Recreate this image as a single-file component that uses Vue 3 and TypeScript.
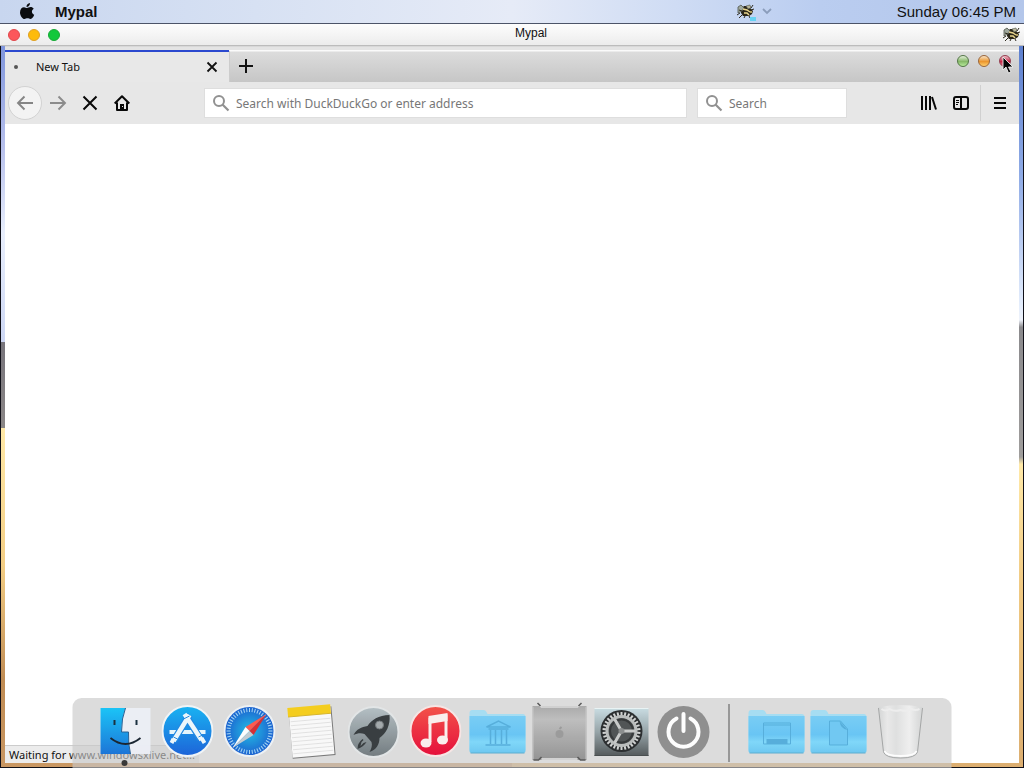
<script setup lang="ts">
import { ref } from 'vue'

interface WindowButton {
  name: string
  tone: string
}

const appName = 'Mypal'
const clock = 'Sunday 06:45 PM'
const address = ref('')
const query = ref('')

const trafficLights: WindowButton[] = [
  { name: 'Close', tone: 'red' },
  { name: 'Minimize', tone: 'amber' },
  { name: 'Zoom', tone: 'green' },
]

const orbs: WindowButton[] = [
  { name: 'Minimize browser', tone: 'lime' },
  { name: 'Restore browser', tone: 'orange' },
  { name: 'Close browser', tone: 'crimson' },
]

const ticks: number[] = Array.from({ length: 48 }, (_, i) => i * 7.5)
const teeth: number[] = Array.from({ length: 30 }, (_, i) => i * 12)
const noteLines: number[] = [17, 21, 25, 29, 33, 37, 41, 45, 49]
</script>

<template>
  <div class="desktop">
    <svg class="defs" width="0" height="0" aria-hidden="true">
      <defs>
        <symbol id="bee" viewBox="0 0 17 15">
          <path d="M4 5l3-3 5 0 2 3 2 2-1 3-3 2-6 0-2-3z" fill="#2a261a" />
          <path d="M1 3l3-2 3 3-2 3-4 2z" fill="#9fa89d" stroke="#4f544b" stroke-width=".8" />
          <path d="M9 2l4-1 1 3-3 1z" fill="#b9b69b" stroke="#4f544b" stroke-width=".6" />
          <path d="M6 5l4 1 3 2M7 9l3 0 2 2" stroke="#e9d58d" stroke-width="1.500" fill="none" />
          <path d="M3 9l-3 2M5 11l-3 3M8 12l-1 2M12 12l1 2M14 4l2-3M14 6l3-1M2 6l3 1" stroke="#2d291d" fill="none" />
          <circle cx="14" cy="8" r="1" fill="#d8c479" />
        </symbol>
        <symbol id="magnifier" viewBox="0 0 18 18">
          <circle cx="7" cy="7" r="5" fill="none" stroke="#919191" stroke-width="2" />
          <path d="M10.500 10.500l6 6" stroke="#919191" stroke-width="2.200" />
        </symbol>
        <symbol id="folder" viewBox="0 0 58 46">
          <path d="M1 4q0-3 3-3h11q2 0 3 2l1 2h35q3 0 3 3v33H1z" fill="#a4def3" />
          <path d="M1 7h56v35q0 2-2 2H3q-2 0-2-2z" fill="url(#folderFace)" />
          <path d="M2 44h54" stroke="#58acd0" />
        </symbol>
        <linearGradient id="folderFace" x1="0" y1="0" x2="0" y2="1">
          <stop offset="0" stop-color="#75cdf6" /><stop offset=".5" stop-color="#65c5f5" />
          <stop offset=".7" stop-color="#7dd7fb" /><stop offset="1" stop-color="#69c7f1" />
        </linearGradient>
        <linearGradient id="finderFace" x1="0" y1="0" x2="0" y2="1">
          <stop offset="0" stop-color="#14c3f8" /><stop offset="1" stop-color="#1672d8" />
        </linearGradient>
        <linearGradient id="storeFace" x1="0" y1="0" x2="0" y2="1">
          <stop offset="0" stop-color="#12b2f3" /><stop offset="1" stop-color="#165fd9" />
        </linearGradient>
        <radialGradient id="safariFace">
          <stop offset="0" stop-color="#1cbde4" /><stop offset="1" stop-color="#155bcf" />
        </radialGradient>
        <linearGradient id="rocketFace" x1="0" y1="0" x2="0" y2="1">
          <stop offset="0" stop-color="#b4bfc4" /><stop offset="1" stop-color="#6f787c" />
        </linearGradient>
        <linearGradient id="musicFace" x1="0" y1="0" x2="0" y2="1">
          <stop offset="0" stop-color="#f44e44" /><stop offset="1" stop-color="#e60735" />
        </linearGradient>
        <linearGradient id="towerFace" x1="0" y1="0" x2="0" y2="1">
          <stop offset="0" stop-color="#a9a9a9" /><stop offset=".25" stop-color="#bdbdbd" /><stop offset="1" stop-color="#929292" />
        </linearGradient>
        <linearGradient id="prefsFace" x1="0" y1="0" x2="0" y2="1">
          <stop offset="0" stop-color="#c9dde3" /><stop offset=".5" stop-color="#94a2a6" /><stop offset="1" stop-color="#4f5557" />
        </linearGradient>
        <linearGradient id="binFace">
          <stop offset="0" stop-color="#d2d4d4" /><stop offset=".2" stop-color="#ececec" />
          <stop offset=".4" stop-color="#e0e1e1" /><stop offset=".7" stop-color="#f3f3f3" /><stop offset="1" stop-color="#d2d4d4" />
        </linearGradient>
      </defs>
    </svg>

    <header class="menubar">
      <button class="plain apple" aria-label="System menu">
        <svg width="16" height="18" viewBox="0 0 16 18">
          <path d="M11 0c.2 2-1.500 4-3.500 4C7.300 2 9 .3 11 0zM8 5c.8 0 2-.9 3.600-.9 1.200 0 2.400.6 3.100 1.600-2.600 1.600-2.200 5 .5 6-.6 1.700-2 4.300-3.700 4.300-1.200 0-1.700-.7-3-.7s-1.900.7-3 .7C3.500 16 1 12.500 1 9.400 1 6 3 4.200 5 4.200c1.300 0 2.300.8 3 .8z" fill="#0b0d10" />
        </svg>
      </button>
      <strong class="app-name">{{ appName }}</strong>
      <button class="plain tray" aria-label="Running applications">
        <svg width="19" height="18" viewBox="0 0 19 18">
          <use href="#bee" y="1" width="17" height="15" /><rect x="13" y="14" width="6" height="4" fill="#66d2f3" />
        </svg>
        <svg width="10" height="7" viewBox="0 0 10 7"><path d="M1 1l4 4 4-4" fill="none" stroke="#8b9dbb" stroke-width="1.800" /></svg>
      </button>
      <time class="clock">{{ clock }}</time>
    </header>

    <div class="titlebar">
      <div class="lights">
        <button v-for="light in trafficLights" :key="light.name" class="light" :class="light.tone" :aria-label="light.name"></button>
      </div>
      <h1>{{ appName }}</h1>
      <svg class="title-bee" width="17" height="15"><use href="#bee" width="17" height="15" /></svg>
    </div>

    <div class="frame">
      <main class="browser">
        <div class="tabstrip">
          <div class="tab">
            <span class="loading"></span>
            <span class="tab-label">New Tab</span>
            <button class="plain" aria-label="Close tab">
              <svg width="12" height="12" viewBox="0 0 12 12"><path d="M1.500 1.500l9 9M10.500 1.500l-9 9" stroke="#111" stroke-width="1.800" /></svg>
            </button>
          </div>
          <button class="plain new-tab" aria-label="Open a new tab">
            <svg width="14" height="14" viewBox="0 0 14 14"><path d="M7 0v14M0 7h14" stroke="#111" stroke-width="2" /></svg>
          </button>
          <div class="orbs">
            <button v-for="orb in orbs" :key="orb.name" class="orb" :class="orb.tone" :aria-label="orb.name"></button>
            <svg class="pointer" width="12" height="18" viewBox="0 0 12 18">
              <path d="M1 1v13l3-3 2.500 6 2.500-1-2.500-5H11z" fill="#050505" stroke="#eee" stroke-width=".9" />
            </svg>
          </div>
        </div>

        <nav class="toolbar">
          <button class="plain back" aria-label="Back">
            <svg width="18" height="16" viewBox="0 0 18 16"><path d="M17 8H2M8.500 1.500L2 8l6.500 6.500" fill="none" stroke="#858585" stroke-width="1.900" /></svg>
          </button>
          <button class="plain tool" aria-label="Forward">
            <svg width="18" height="16" viewBox="0 0 18 16"><path d="M1 8h15M9.500 1.500L16 8l-6.500 6.500" fill="none" stroke="#8b8b8b" stroke-width="1.900" /></svg>
          </button>
          <button class="plain tool" aria-label="Stop">
            <svg width="16" height="16" viewBox="0 0 16 16"><path d="M1.500 1.500l13 13M14.500 1.500l-13 13" stroke="#080808" stroke-width="2" /></svg>
          </button>
          <button class="plain tool" aria-label="Home">
            <svg width="16" height="16" viewBox="0 0 16 16">
              <path d="M.7 8.500L8 1.200l7.300 7.300M3 7.500V15h10V7.500" fill="none" stroke="#080808" stroke-width="2" stroke-linejoin="round" />
              <path d="M6 9h4v5H6z" fill="#080808" /><path d="M8 11h1v1H8z" fill="#e8e8e8" />
            </svg>
          </button>
          <label class="field address">
            <svg width="18" height="18"><use href="#magnifier" /></svg>
            <input v-model="address" type="text" aria-label="Address" placeholder="Search with DuckDuckGo or enter address" />
          </label>
          <label class="field search">
            <svg width="18" height="18"><use href="#magnifier" /></svg>
            <input v-model="query" type="text" aria-label="Search" placeholder="Search" />
          </label>
          <div class="tools-end">
            <button class="plain tool" aria-label="Library">
              <svg width="16" height="14" viewBox="0 0 16 14"><path d="M1 0v14M5 0v14M9 0v14M11 1l4 12.500" stroke="#080808" stroke-width="2" /></svg>
            </button>
            <button class="plain tool" aria-label="Sidebars">
              <svg width="16" height="14" viewBox="0 0 16 14">
                <rect x="1" y="1" width="14" height="12" rx="2" fill="none" stroke="#080808" stroke-width="2" />
                <path d="M8 1v12" stroke="#080808" stroke-width="2" /><path d="M3 4.500h3M3 6.500h3M3 8.500h2" stroke="#080808" />
              </svg>
            </button>
            <button class="plain menu" aria-label="Open menu">
              <svg width="12" height="12" viewBox="0 0 12 12"><path d="M0 1h12M0 6h12M0 11h12" stroke="#080808" stroke-width="2" /></svg>
            </button>
          </div>
        </nav>

        <section class="page" aria-label="Page">
          <p class="status">Waiting for www.windowsxlive.net...</p>
        </section>
      </main>
    </div>

    <nav class="dock" aria-label="Dock">
      <button class="plain app" aria-label="Finder">
        <svg width="52" height="58" viewBox="0 0 52 58">
          <path d="M1 5h50v46H1z" fill="#eceff6" />
          <path d="M1 5h25q-4 10-4 24h7q-.5 12 2 22H1z" fill="url(#finderFace)" />
          <path d="M26 5q-4 10-4 24h7q-.5 12 2 22" fill="none" stroke="#235d91" />
          <path d="M15 17v5M37 17v5" stroke="#142b3a" stroke-width="2" />
          <path d="M11 35q15 12 30 0" fill="none" stroke="#14202c" stroke-width="1.800" />
        </svg>
        <span class="running"></span>
      </button>
      <button class="plain app" aria-label="App Store">
        <svg width="52" height="58" viewBox="0 0 52 58">
          <circle cx="26" cy="28" r="25" fill="url(#storeFace)" stroke="#f1f5f8" stroke-width="2" />
          <path d="M8 29h36" stroke="#e6f5fd" stroke-width="4" />
          <path d="M28 12L12 38M24 12l15 24" stroke="#1c87e3" stroke-width="7" />
          <path d="M28 12L12 38M23 11l17 26" stroke="#edf8fd" stroke-width="4.500" />
          <path d="M12 36l-2 4M40 35l3 5" stroke="#edf8fd" stroke-width="4" /><path d="M22 16l6-3M12 34l4 2M37 34l4-2" stroke="#2285df" />
        </svg>
      </button>
      <button class="plain app" aria-label="Safari">
        <svg width="52" height="58" viewBox="0 0 52 58">
          <circle cx="26" cy="28" r="25" fill="url(#safariFace)" stroke="#eef2f5" stroke-width="2" />
          <path v-for="angle in ticks" :key="angle" d="M26 5v4" stroke="#a6d6f6" :transform="`rotate(${angle} 26 28)`" />
          <path d="M43 11L22 24l4 4z" fill="#ff5549" /><path d="M43 11L30 32l-4-4z" fill="#d7292d" />
          <path d="M22 24L9 45l17-17z" fill="#fff" /><path d="M9 45l21-13-4-4z" fill="#c3ccd2" />
        </svg>
      </button>
      <button class="plain app" aria-label="Notes">
        <svg width="52" height="58" viewBox="0 0 52 58">
          <g transform="rotate(-5 26 29)">
            <path d="M5 5h43v49H5z" fill="#777" /><path d="M5 4h42v49H5z" fill="#fafafa" />
            <path v-for="line in noteLines" :key="line" :d="`M6 ${line}h40`" stroke="#e2e2e2" />
            <path d="M4 3h43v9H4z" fill="#f6cd17" /><path d="M4 12h43" stroke="#d5b329" />
          </g>
        </svg>
      </button>
      <button class="plain app" aria-label="Launchpad">
        <svg width="52" height="58" viewBox="0 0 52 58">
          <circle cx="26" cy="29" r="25" fill="url(#rocketFace)" stroke="#e3e6e7" stroke-width="2" />
          <path d="M42 12c-11 0-18 5-22 11-6 1-11 3-14 9 4-2 8-2 11-1l7 8c1 3 0 7-2 10 7-2 10-8 10-14 7-5 11-13 10-23z" fill="#33383b" />
          <circle cx="32" cy="22" r="4" fill="#a1a7aa" stroke="#71777a" />
          <path d="M15 36q-5 4-5 10 6-2 9-7l-3 1-3 3 1-4 2-2z" fill="#33383b" />
        </svg>
      </button>
      <button class="plain app" aria-label="Music">
        <svg width="52" height="58" viewBox="0 0 52 58">
          <circle cx="26" cy="28" r="25" fill="url(#musicFace)" stroke="#f8e6e5" stroke-width="2" />
          <path d="M20.500 39V16L36.500 13v24" fill="none" stroke="#fbefed" stroke-width="3" /><path d="M19 13l19-3v8l-19 3z" fill="#fbefed" />
          <ellipse cx="16.500" cy="40" rx="5.500" ry="4.500" fill="#fbefed" /><ellipse cx="33" cy="37" rx="5.500" ry="4.500" fill="#fbefed" />
        </svg>
      </button>
      <button class="plain app" aria-label="Library folder">
        <svg width="58" height="46" viewBox="0 0 58 46">
          <use href="#folder" />
          <path d="M18 18l12-6 12 6zM20 20h20M17 36h25M22 21v14M27 21v14M33 21v14M38 21v14" fill="none" stroke="#52addb" stroke-width="1.500" />
        </svg>
      </button>
      <button class="plain app" aria-label="Computer">
        <svg width="56" height="60" viewBox="0 0 56 60">
          <path d="M1 4h54v54H1z" fill="url(#towerFace)" />
          <path d="M6 2l4 3h36l4-3" fill="none" stroke="#ddd" stroke-width="1.500" />
          <path d="M6 1l3 3M50 1l-3 3M2 58h5l3-3M54 58h-5l-3-3" fill="none" stroke="#555" stroke-width="1.500" />
          <path d="M10 57h36" stroke="#d2d2d2" stroke-width="2" />
          <path d="M1.500 5v52M54.500 5v52" stroke="#c6c6c6" />
          <circle cx="28" cy="32" r="4" fill="#999" /><path d="M28 27l2-2" stroke="#999" stroke-width="2" />
        </svg>
      </button>
      <button class="plain app" aria-label="System Preferences">
        <svg width="56" height="58" viewBox="0 0 56 58">
          <path d="M1 5h54v48H1z" fill="url(#prefsFace)" /><path d="M1 5.500h54" stroke="#eaf4f6" /><path d="M1 52.500h54" stroke="#454a4b" />
          <circle cx="28" cy="28" r="21" fill="#25282a" />
          <path v-for="angle in teeth" :key="angle" d="M28 9v5" stroke="#d1d3d2" stroke-width="2" :transform="`rotate(${angle} 28 28)`" />
          <circle cx="28" cy="28" r="14.500" fill="#4c5051" stroke="#b9bcbb" stroke-width="3" />
          <circle cx="28" cy="28" r="11.500" fill="none" stroke="#303334" stroke-width="2" />
          <path d="M28 28h14M28 28l-7-12M28 28l-7 12" stroke="#c8cac9" stroke-width="3" /><circle cx="28" cy="28" r="3" fill="#888b8b" />
        </svg>
      </button>
      <button class="plain app" aria-label="Power">
        <svg width="54" height="58" viewBox="0 0 54 58">
          <circle cx="27" cy="29" r="26" fill="#8c8c8c" />
          <path d="M20 15.500a15 15 0 1 0 14 0M27 11v17" fill="none" stroke="#fff" stroke-width="4" stroke-linecap="round" />
        </svg>
      </button>
      <span class="divider"></span>
      <button class="plain app" aria-label="Desktop folder">
        <svg width="58" height="46" viewBox="0 0 58 46">
          <use href="#folder" /><path d="M16 14h27v21H16zM16 16h27" fill="none" stroke="#52addb" /><path d="M19 30h21v5H19z" fill="#52addb" />
        </svg>
      </button>
      <button class="plain app" aria-label="Documents folder">
        <svg width="58" height="46" viewBox="0 0 58 46">
          <use href="#folder" /><path d="M20 12h11l7 8v16H20z" fill="#6dc8f3" stroke="#52addb" /><path d="M30 12l8 9q-7-1-8-9z" fill="#52addb" />
        </svg>
      </button>
      <button class="plain app" aria-label="Trash">
        <svg width="46" height="56" viewBox="0 0 46 56">
          <path d="M1 3q22-4 44 0l-5 45q-2 6-17 6T6 48z" fill="url(#binFace)" opacity=".85" />
          <path d="M1 4l5 44q2 6 17 6t17-6l5-44" fill="none" stroke="#a2a4a4" /><path d="M7 47q2 5 16 5t16-5" fill="none" stroke="#fff" stroke-width="2" />
          <path d="M4 5q4 3 8 0 5 3 11 1 6 2 11-1 4 2 8 0" fill="none" stroke="#eee" stroke-width="2" />
        </svg>
      </button>
    </nav>
  </div>
</template>

<style>
html,
body {
  height: 100%;
}
body {
  margin: 0;
}
</style>

<style scoped>
.desktop {
  position: relative;
  display: flex;
  flex-direction: column;
  min-height: 100vh;
  overflow: hidden;
  font-family: "Noto Sans", "Open Sans", sans-serif;
  font-size: 11px;
  color: #111;
  background: #fff;
}
.defs {
  position: absolute;
}
svg {
  display: block;
  flex: none;
}
.plain {
  display: flex;
  align-items: center;
  justify-content: center;
  padding: 0;
  border: 0;
  background: none;
  color: inherit;
  font: inherit;
}
.menubar {
  display: flex;
  align-items: center;
  box-sizing: border-box;
  height: 24px;
  padding: 0 8px 0 19px;
  border-bottom: 1px solid #4c5468;
  background: linear-gradient(90deg, #c8d6ef, #d7e1f3 25%, #e6ebf7 50%, #cfdcf4 66%, #bacdf0 80%, #b3c6ea);
  font-family: "Liberation Sans", Arial, sans-serif;
  font-size: 15px;
}
.app-name {
  flex: 1;
  margin-left: 20px;
}
.tray {
  gap: 6px;
  margin-right: 125px;
}
.titlebar {
  display: grid;
  grid-template-columns: 1fr auto 1fr;
  align-items: center;
  box-sizing: border-box;
  height: 22px;
  padding: 0 4px 0 8px;
  border-bottom: 1px solid #bcbcbc;
  background: linear-gradient(#fdfdfd, #ececec);
  font-family: "Liberation Sans", Arial, sans-serif;
}
.titlebar h1 {
  margin: 0;
  padding-left: 34px;
  font-size: 12px;
  font-weight: 400;
  line-height: 18px;
  align-self: start;
}
.lights {
  display: flex;
  gap: 8px;
}
.light {
  width: 12px;
  height: 12px;
  padding: 0;
  border: 1px solid;
  border-radius: 50%;
}
.red {
  background: #fc575b;
  border-color: #e0484c;
}
.amber {
  background: #fdbb0c;
  border-color: #dfa023;
}
.green {
  background: #12c83c;
  border-color: #17a936;
}
.title-bee {
  justify-self: end;
}
.frame {
  display: flex;
  flex: 1;
  padding: 0 4px 4px;
  border: solid #101018;
  border-width: 0 1px 1px;
  background:
    linear-gradient(#7f95dc, #b7c0ec 14%, #e8eefc 26%, #cdd7f4 41%, #77747b 41%, #8b8787 53%, #ffe9a8 53%, #f3ce85 72%, #c08c54 88%, #c99762) left / 50% 100% no-repeat,
    linear-gradient(#5d7fce, #8fabe6 18%, #e4edfc 36%, #eef2fa 38%, #8b8a8d 39%, #9f9d9c 57%, #ffe9a8 58%, #f0c982 75%, #dcae70) right / 50% 100% no-repeat;
}
.browser {
  display: flex;
  flex: 1;
  flex-direction: column;
  background: #fff;
}
.tabstrip {
  display: flex;
  box-sizing: border-box;
  height: 36px;
  padding-top: 4px;
  border-top: 1px solid #d8d8d8;
  background: linear-gradient(#e4e4e4 0 3px, #fafafa 3px 4px, #dcdcdc 5px, #c6c6c6);
}
.tab {
  display: flex;
  align-items: center;
  box-sizing: border-box;
  width: 224px;
  margin-top: -1px;
  padding: 0 11px 0 9px;
  border-top: 2px solid #2b49cf;
  background: #e8e8e8;
}
.loading {
  width: 4px;
  height: 4px;
  border-radius: 50%;
  background: #555;
}
.tab-label {
  flex: 1;
  margin-left: 18px;
  line-height: 16px;
  padding-bottom: 1px;
}
.new-tab {
  width: 32px;
  padding-bottom: 2px;
  border-left: 1px solid #ccc;
}
.orbs {
  position: relative;
  display: flex;
  gap: 9px;
  align-items: flex-start;
  margin-left: auto;
  padding: 4px 8px 0 0;
}
.orb {
  width: 12px;
  height: 12px;
  padding: 0;
  border: 1px solid;
  border-radius: 50%;
}
.lime {
  border-color: #537546;
  background: linear-gradient(#e2edd8, #87b969 55%, #b7eb9b);
}
.orange {
  border-color: #99643a;
  background: linear-gradient(#f7e3c8, #eb962e 55%, #ffd06c);
}
.crimson {
  border-color: #963d50;
  background: linear-gradient(#edc3ca, #c72949 55%, #e37188);
}
.pointer {
  position: absolute;
  right: 5px;
  top: 5px;
}
.toolbar {
  display: flex;
  align-items: center;
  box-sizing: border-box;
  height: 42px;
  padding: 0 1px 0 3px;
  background: #e7e7e7;
}
.back {
  box-sizing: border-box;
  width: 34px;
  height: 34px;
  border: 1px solid #d2d2d2;
  border-radius: 50%;
  background: #f3f3f3;
}
.tool {
  width: 32px;
  height: 32px;
}
.field {
  display: flex;
  align-items: center;
  gap: 6px;
  box-sizing: border-box;
  height: 30px;
  padding: 0 7px;
  border: 1px solid #dedede;
  background: #fff;
}
.address {
  flex: 1;
  margin-left: 66px;
}
.search {
  width: 150px;
  margin-left: 10px;
}
.field input {
  flex: 1;
  min-width: 0;
  padding: 1px 0 0;
  border: 0;
  outline: 0;
  background: none;
  font: 12px "Noto Sans", "Open Sans", sans-serif;
}
.field input::placeholder {
  color: #777;
  opacity: 1;
}
.tools-end {
  display: flex;
  align-items: center;
  margin-left: 66px;
}
.menu {
  width: 38px;
  height: 36px;
  margin-left: 3px;
  border-left: 1px solid #d0d0d0;
}
.page {
  display: flex;
  flex: 1;
  align-items: flex-end;
}
.status {
  box-sizing: border-box;
  height: 18px;
  margin: 0;
  padding: 0 4px;
  border-top: 1px solid #ccc;
  background: #ececec;
  line-height: 18px;
}
.dock {
  position: absolute;
  bottom: 0;
  left: 50%;
  display: flex;
  box-sizing: border-box;
  height: 70px;
  padding: 0 20px 0 22px;
  border-radius: 9px 9px 0 0;
  background: rgba(200, 200, 200, 0.64);
  transform: translateX(-50%);
}
.app {
  position: relative;
  width: 62px;
  height: 68px;
  opacity: 0.96;
}
.running {
  position: absolute;
  bottom: 0;
  left: 27px;
  width: 6px;
  height: 6px;
  border-radius: 50%;
  background: #333;
}
.divider {
  width: 1px;
  height: 58px;
  margin: 6px 16px 0 14px;
  background: #555;
}
</style>
